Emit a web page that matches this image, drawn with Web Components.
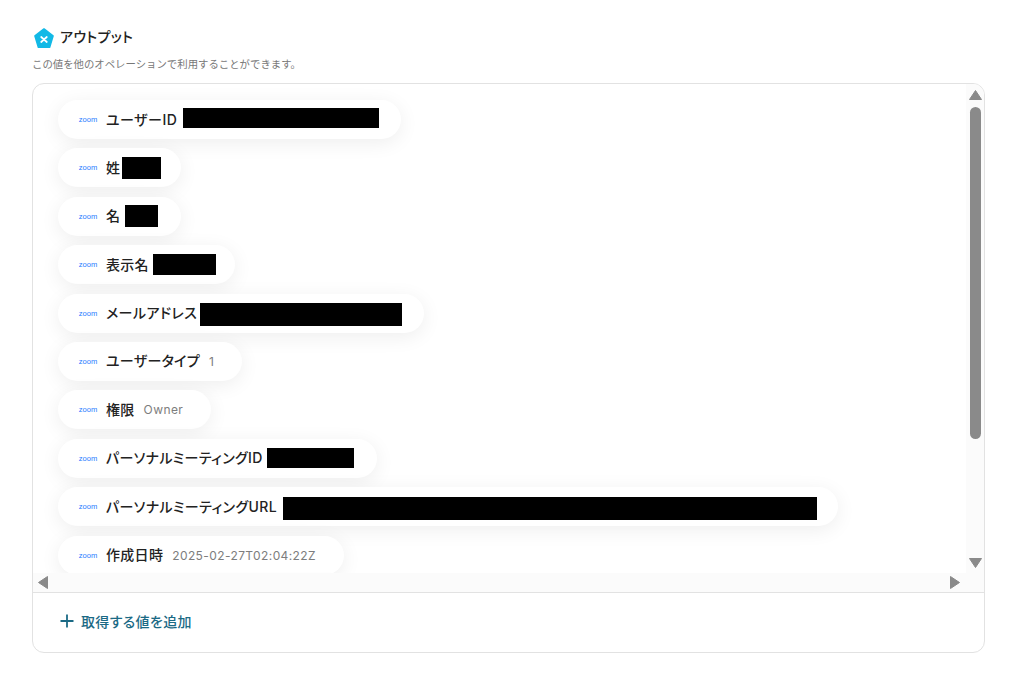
<!DOCTYPE html>
<html lang="ja">
<head>
<meta charset="utf-8">
<title>アウトプット</title>
<style>
  html, body { margin: 0; background: #fff; }
  body { font-family: Inter, "Noto Sans CJK JP", sans-serif; color: #2b2b2b; font-feature-settings: "palt"; }
</style>
</head>
<body>
<output-panel>
  <output-pill label="ユーザーID" mask="196" gap="6" h="20" pad="22" ls="0.5" shift="-3"></output-pill>
  <output-pill label="姓" mask="39" gap="2" pad="20" h="22"></output-pill>
  <output-pill label="名" mask="33" gap="5" pad="23" h="22"></output-pill>
  <output-pill label="表示名" mask="63" gap="4" pad="19" h="21"></output-pill>
  <output-pill label="メールアドレス" mask="202" gap="3" pad="22" h="23" shift="2" ls="0.43"></output-pill>
  <output-pill label="ユーザータイプ" value="1"></output-pill>
  <output-pill label="権限" value="Owner"></output-pill>
  <output-pill label="パーソナルミーティングID" mask="87" gap="4" pad="23" h="20" ls="0.35"></output-pill>
  <output-pill label="パーソナルミーティングURL" mask="534" gap="6" pad="21" h="23" ls="0.4" shift="4"></output-pill>
  <output-pill label="作成日時" value="2025-02-27T02:04:22Z"></output-pill>
  <output-pill label="最終ログイン" value="2025-02-27T02:04:22Z"></output-pill>
</output-panel>

<script>
class OutputPill extends HTMLElement {
  constructor() {
    super();
    this.attachShadow({ mode: 'open' });
  }

  connectedCallback() {
    const label = this.getAttribute('label') || '';
    const value = this.getAttribute('value');
    const mask = this.getAttribute('mask');
    const gap = this.getAttribute('gap') || 8;
    const pad = this.getAttribute('pad') || 28;
    const h = this.getAttribute('h') || 21;
    const ls = this.getAttribute('ls') || 0.3;
    const shift = Number(this.getAttribute('shift')) || 0;

    this.shadowRoot.innerHTML = `
      <style>
        :host { display: flex; flex: none; }
        .pill {
          display: flex;
          align-items: center;
          height: 39px;
          padding: 0 ${pad}px 0 21px;
          border-radius: 20px;
          background: #fff;
          box-shadow: 0 4px 20px rgba(0, 0, 0, 0.07);
          white-space: nowrap;
        }
        .logo {
          width: 18px;
          margin-right: 9px;
          font: 400 7px/1 "Liberation Sans", sans-serif;
          color: #1f7bff;
          text-align: center;
          transform: scaleX(1.08);
        }
        .label { margin-bottom: 2px; font-size: 14px; font-weight: 500; letter-spacing: ${ls}px; color: #222; }
        .value { margin-left: 9px; font-size: 12px; letter-spacing: 0.4px; color: #7d7d7d; }
        .mask {
          margin: ${Math.max(shift, 0)}px 0 ${Math.max(-shift, 0)}px ${gap}px;
          height: ${h}px;
          background: #000;
        }
      </style>
      <div class="pill">
        <span class="logo">zoom</span>
        <span class="label">${label}</span>
        ${value ? `<span class="value">${value}</span>` : ''}
        ${mask ? `<span class="mask" style="width:${mask}px"></span>` : ''}
      </div>
    `;
  }
}

class ScrollTrack extends HTMLElement {
  constructor() {
    super();
    this.attachShadow({ mode: 'open' });
  }

  connectedCallback() {
    const vertical = this.getAttribute('dir') !== 'h';

    this.shadowRoot.innerHTML = vertical ? `
      <style>
        :host { display: flex; flex-direction: column; align-items: center; background: #fbfbfb; box-sizing: border-box; padding: 6px 0 5px; }
        .thumb { width: 11px; height: 332px; margin-top: 7px; border-radius: 6px; background: #8a8a8a; }
        svg { display: block; flex: none; overflow: visible; }
        .end { margin-top: auto; }
      </style>
      <svg width="13" height="10" viewBox="0 0 13 10"><path d="M6.5 0.5L12.5 9.5H0.5z" fill="#8a8a8a" stroke="#8a8a8a" stroke-linejoin="round"/></svg>
      <div class="thumb"></div>
      <svg class="end" width="13" height="10" viewBox="0 0 13 10"><path d="M0.5 0.5H12.5L6.5 9.5z" fill="#8a8a8a" stroke="#8a8a8a" stroke-linejoin="round"/></svg>
    ` : `
      <style>
        :host { display: flex; align-items: center; background: #fbfbfb; padding: 0 24px 0 5px; }
        svg { display: block; flex: none; overflow: visible; }
        .end { margin-left: auto; }
      </style>
      <svg width="10" height="13" viewBox="0 0 10 13"><path d="M9.5 0.5V12.5L0.5 6.5z" fill="#8a8a8a" stroke="#8a8a8a" stroke-linejoin="round"/></svg>
      <svg class="end" width="10" height="13" viewBox="0 0 10 13"><path d="M0.5 0.5L9.5 6.5 0.5 12.5z" fill="#8a8a8a" stroke="#8a8a8a" stroke-linejoin="round"/></svg>
    `;
  }
}

class OutputPanel extends HTMLElement {
  constructor() {
    super();
    this.attachShadow({ mode: 'open' });
  }

  connectedCallback() {
    this.shadowRoot.innerHTML = `
      <style>
        :host { display: block; box-sizing: border-box; width: 1025px; height: 682px; padding: 25px 40px 0 32px; }
        .head { display: flex; align-items: center; gap: 6px; height: 22px; padding-left: 2px; }
        .head svg { margin-top: 4px; }
        .head h2 { margin: 0; font-size: 14px; font-weight: 500; letter-spacing: 0.35px; color: #222; }
        .note { margin: 10px 0 0; font-size: 10.4px; line-height: 15px; font-feature-settings: normal; color: #777; }
        .card {
          display: flex;
          flex-direction: column;
          height: 570px;
          margin-top: 11px;
          box-sizing: border-box;
          border: 1px solid #e2e2e2;
          border-radius: 12px;
          overflow: hidden;
        }
        .scroller { display: grid; grid-template-columns: 1fr 18px; grid-template-rows: 489px 19px; height: 508px; border-bottom: 1px solid #e2e2e2; }
        .list { display: flex; flex-direction: column; align-items: flex-start; gap: 9.4px; padding: 16px 0 0 25px; overflow: hidden; }
        .add { display: flex; align-items: center; gap: 7px; flex: 1; padding: 0 0 4px 27px; font-size: 14px; font-weight: 500; letter-spacing: 0.35px; color: #1b6a85; }
        svg { display: block; flex: none; }
      </style>
      <div class="head">
        <svg width="20" height="21" viewBox="0 0 20 21">
          <path d="M10 1L19 7.9 15.6 19.3H4.4L1 7.9z" fill="#12b9e6" stroke="#12b9e6" stroke-width="1.6" stroke-linejoin="round"/>
          <path d="M7.2 9L12.8 14M12.8 9L7.2 14" stroke="#fff" stroke-width="1.7" stroke-linecap="round"/>
        </svg>
        <h2>アウトプット</h2>
      </div>
      <p class="note">この値を他のオペレーションで利用することができます。</p>
      <div class="card">
        <div class="scroller">
          <div class="list"><slot></slot></div>
          <scroll-track></scroll-track>
          <scroll-track dir="h" style="grid-column: 1 / 3"></scroll-track>
        </div>
        <div class="add">
          <svg width="14" height="14" viewBox="0 0 14 14"><path d="M7 0.5V13.5M0.5 7H13.5" stroke="#1b6a85" stroke-width="1.8"/></svg>
          <span>取得する値を追加</span>
        </div>
      </div>
    `;
  }
}

customElements.define('output-pill', OutputPill);
customElements.define('scroll-track', ScrollTrack);
customElements.define('output-panel', OutputPanel);
</script>
</body>
</html>
